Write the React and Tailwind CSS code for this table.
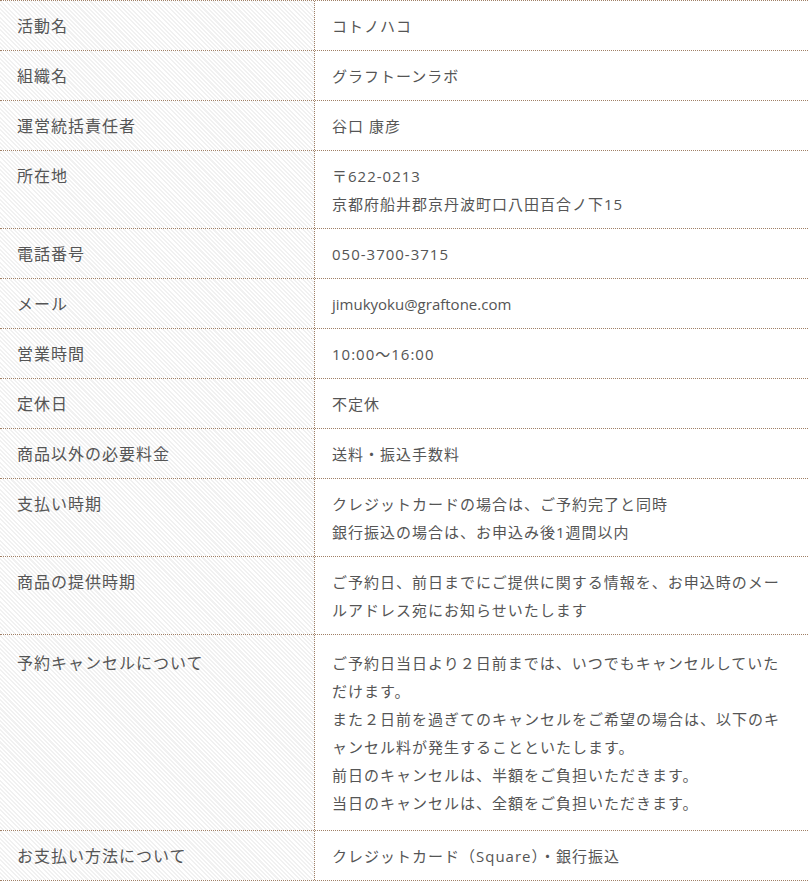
import React from "react";

const rows = [
  { label: "活動名", lines: ["コトノハコ"] },
  { label: "組織名", lines: ["グラフトーンラボ"] },
  { label: "運営統括責任者", lines: ["谷口 康彦"] },
  { label: "所在地", lines: ["〒622-0213", "京都府船井郡京丹波町口八田百合ノ下15"] },
  { label: "電話番号", lines: ["050-3700-3715"] },
  { label: "メール", lines: ["jimukyoku@graftone.com"], latin: true },
  { label: "営業時間", lines: ["10:00〜16:00"] },
  { label: "定休日", lines: ["不定休"] },
  { label: "商品以外の必要料金", lines: ["送料・振込手数料"] },
  { label: "支払い時期", lines: ["クレジットカードの場合は、ご予約完了と同時", "銀行振込の場合は、お申込み後1週間以内"] },
  { label: "商品の提供時期", lines: ["ご予約日、前日までにご提供に関する情報を、お申込時のメールアドレス宛にお知らせいたします"] },
  {
    label: "予約キャンセルについて",
    lines: [
      "ご予約日当日より２日前までは、いつでもキャンセルしていただけます。",
      "また２日前を過ぎてのキャンセルをご希望の場合は、以下のキャンセル料が発生することといたします。",
      "前日のキャンセルは、半額をご負担いただきます。",
      "当日のキャンセルは、全額をご負担いただきます。",
    ],
    tall: true,
  },
  { label: "お支払い方法について", lines: ["クレジットカード（Square）・銀行振込"] },
];

export default function App() {
  return (
    <div className="w-[808px] bg-white text-[#555] font-['Open_Sans','Noto_Sans_CJK_JP',sans-serif]">
      <div className="border-t border-dotted border-[#a08066]">
        {rows.map((row) => (
          <div
            key={row.label}
            className="grid grid-cols-[315px_1fr] border-b border-dotted border-[#a08066]"
          >
            {/* left: striped heading cell */}
            <div
              className={`border-r border-dotted border-[#a08066] bg-[repeating-linear-gradient(45deg,#ffffff_0px,#ffffff_1.5px,#f1f1f1_1.5px,#f1f1f1_3px)] pl-[17px] text-[16px] leading-[28px] tracking-[1px] ${
                row.tall ? "pt-[14px] pb-[13px]" : "pt-[11px] pb-[10px]"
              }`}
            >
              {row.label}
            </div>
            <div
              className={`pl-[17px] pr-[20px] text-[15px] leading-[28px] ${
                row.latin ? "tracking-normal" : "tracking-[1px]"
              } ${row.tall ? "pt-[14px] pb-[13px]" : "pt-[11px] pb-[10px]"}`}
            >
              {row.lines.map((line, i) => (
                <div key={i}>{line}</div>
              ))}
            </div>
          </div>
        ))}
      </div>
    </div>
  );
}
